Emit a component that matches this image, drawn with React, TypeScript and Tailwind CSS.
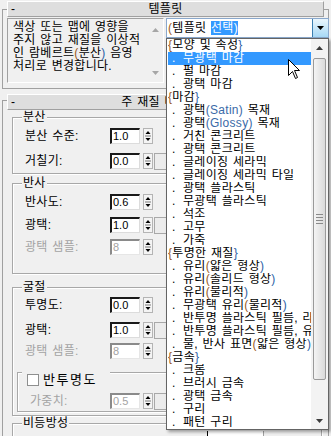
import React from "react";

const FONT = "font-['Liberation_Sans','Noto_Sans_CJK_KR',sans-serif]";

type Item = { text: string; head?: boolean; sel?: boolean };

const ITEMS: Item[] = [
  { text: "{모양 및 속성}", head: true },
  { text: "무광택 마감", sel: true },
  { text: "펄 마감" },
  { text: "광택 마감" },
  { text: "{마감}", head: true },
  { text: "광택(Satin) 목재" },
  { text: "광택(Glossy) 목재" },
  { text: "거친 콘크리트" },
  { text: "광택 콘크리트" },
  { text: "글레이징 세라믹" },
  { text: "글레이징 세라믹 타일" },
  { text: "광택 플라스틱" },
  { text: "무광택 플라스틱" },
  { text: "석조" },
  { text: "고무" },
  { text: "가죽" },
  { text: "{투명한 재질}", head: true },
  { text: "유리(얇은 형상)" },
  { text: "유리(솔리드 형상)" },
  { text: "유리(물리적)" },
  { text: "무광택 유리(물리적)" },
  { text: "반투명 플라스틱 필름, 라이트 블러" },
  { text: "반투명 플라스틱 필름, 유백색 유리" },
  { text: "물, 반사 표면(얇은 형상)" },
  { text: "{금속}", head: true },
  { text: "크롬" },
  { text: "브러시 금속" },
  { text: "광택 금속" },
  { text: "구리" },
  { text: "패턴 구리" },
];

// the old gulim rendering tints brackets and latin words, mimic it a little
function Paint({ text, plain }: { text: string; plain?: boolean }) {
  if (plain) return <>{text}</>;
  const parts = text.split(/(\([A-Za-z]+\)|[(){}])/).filter(Boolean);
  return (
    <>
      {parts.map((p, i) => {
        if (/^\([A-Za-z]+\)$/.test(p))
          return (
            <span key={i} className="text-[#3a6aa8]">
              {p}
            </span>
          );
        if (p === "(" || p === "{")
          return (
            <span key={i} className="text-[#9a5a22]">
              {p}
            </span>
          );
        if (p === ")" || p === "}")
          return (
            <span key={i} className="text-[#2d5fa6]">
              {p}
            </span>
          );
        return <React.Fragment key={i}>{p}</React.Fragment>;
      })}
    </>
  );
}

function RolloutHeader({ title, className }: { title: string; className: string }) {
  return (
    <div
      className={`flex h-[16px] items-center border border-b-[#a0a0a0] border-l-white border-r-[#a0a0a0] border-t-white bg-[#dedede] ${className}`}
    >
      <span className="w-[14px] shrink-0 pl-[3px]">-</span>
      <span className="flex-1 whitespace-nowrap text-center">{title}</span>
      <span className="w-[14px] shrink-0" />
    </div>
  );
}

function Arrow({ up, color = "#000" }: { up?: boolean; color?: string }) {
  return (
    <svg width="7" height="4" viewBox="0 0 7 4">
      <path d={up ? "M3.5 0 L7 4 L0 4 Z" : "M0 0 L7 0 L3.5 4 Z"} fill={color} />
    </svg>
  );
}

function Spinner() {
  return (
    <svg width="10" height="16" viewBox="0 0 10 16" className="ml-[3px] shrink-0">
      <rect x="0.5" y="0.5" width="9" height="15" fill="#f4f4f4" stroke="#b4b4b4" />
      <path d="M5 3 L7.5 6 L2.5 6 Z" fill="#000" />
      <path d="M2 8 H8" stroke="#7a7a7a" />
      <path d="M2.5 10 L7.5 10 L5 13 Z" fill="#000" />
    </svg>
  );
}

type RowProps = {
  label: string;
  value: string;
  mt: string;
  disabled?: boolean;
  map?: boolean;
  inner?: boolean;
};

function Row({ label, value, mt, disabled, map, inner }: RowProps) {
  return (
    <div className={`flex h-[16px] items-center ${mt}`}>
      <span
        className={`shrink-0 whitespace-nowrap pl-[12px] ${inner ? "w-[92px]" : "w-[97px]"} ${
          disabled ? "text-[#a3a3a3]" : "text-black"
        }`}
      >
        {label}
      </span>
      <div
        className={`flex h-[16px] w-[30px] shrink-0 items-center border-b border-l-2 border-r border-t-2 bg-white pl-[1px] font-['Liberation_Sans',sans-serif] text-[11px] tracking-normal ${
          disabled
            ? "border-b-[#e6e6e6] border-l-[#8a8a8a] border-r-[#e6e6e6] border-t-[#8a8a8a] text-[#a3a3a3]"
            : "border-b-[#dcdcdc] border-l-[#1a1a1a] border-r-[#dcdcdc] border-t-[#1a1a1a] text-black"
        }`}
      >
        {value}
      </div>
      <Spinner />
      {map && <div className="ml-[1px] h-[17px] w-[30px] shrink-0 border border-[#a8a8a8] bg-[#ececec]" />}
    </div>
  );
}

function GroupTitle({ text }: { text: string }) {
  return <div className="-mt-[7px] ml-[9px] w-fit bg-[#f0f0f0] px-[1px]">{text}</div>;
}

const ETCH = "border border-[#a8a8a8] shadow-[inset_1px_1px_0_#ffffff,1px_1px_0_#ffffff]";

export default function App() {
  return (
    <div
      className={`relative h-[436px] w-[331px] overflow-hidden bg-[#f0f0f0] text-[12px] leading-[13px] tracking-[0.3px] [word-spacing:1px] text-black ${FONT}`}
    >
      {/* 템플릿 rollout */}
      <div className="mx-[2px] mt-[9px] h-[80px] border border-[#a0a0a0]">
        <RolloutHeader title="템플릿" className="-mt-[9px] mx-[4px]" />
        <div className="mt-[1px] flex">
          <div className="ml-[4px] flex h-[65px] w-[157px] shrink-0 border border-b-white border-l-[#a0a0a0] border-r-white border-t-[#a0a0a0] bg-[#f0f0f0]">
            <div className="flex-1 whitespace-nowrap pl-[5px] pt-[2px]">
              <div>색상 또는 맵에 영향을</div>
              <div>주지 않고 재질을 이상적</div>
              <div>
                인 람베르트<Paint text="(분산)" /> 음영
              </div>
              <div>처리로 변경합니다.</div>
            </div>
            <div className="flex w-[16px] flex-col items-center pt-[9px]">
              <Arrow up color="#a6a6a6" />
              <div className="mt-[39px]">
                <Arrow color="#a6a6a6" />
              </div>
            </div>
          </div>

          {/* combobox */}
          <div className="ml-[2px] flex h-[20px] w-[163px] shrink-0 border border-[#8aa8cc] bg-white">
            <div className="flex flex-1 items-center whitespace-pre pl-[1px]">
              <Paint text="(템플릿 " />
              <span className="flex h-[14px] items-center bg-[#3399ff] text-white">선택)</span>
            </div>
            <div className="flex w-[16px] items-center justify-center border-l border-[#3c7fb1] bg-linear-to-b from-[#eaf6fd] to-[#a7d9f5]">
              <Arrow />
            </div>
          </div>
        </div>
      </div>

      {/* 주 재질 매개변수 rollout */}
      <div className="mx-[2px] mt-[11px] border-l border-r border-t border-[#a0a0a0] pb-[20px]">
        <RolloutHeader title="주 재질 매개변수" className="-mt-[7px] mx-[4px]" />

        <div className={`ml-[9px] mr-[6px] mt-[7px] pb-[4px] ${ETCH}`}>
          <GroupTitle text="분산" />
          <Row label="분산 수준:" value="1.0" mt="mt-[4px]" />
          <Row label="거칠기:" value="0.0" mt="mt-[9px]" map />
        </div>

        <div className={`ml-[9px] mr-[6px] mt-[9px] pb-[18px] ${ETCH}`}>
          <GroupTitle text="반사" />
          <Row label="반사도:" value="0.6" mt="mt-[4px]" />
          <Row label="광택:" value="1.0" mt="mt-[7px]" map />
          <Row label="광택 샘플:" value="8" mt="mt-[6px]" disabled />
        </div>

        <div className={`ml-[9px] mr-[6px] mt-[13px] pb-[3px] ${ETCH}`}>
          <GroupTitle text="굴절" />
          <Row label="투명도:" value="0.0" mt="mt-[3px]" />
          <Row label="광택:" value="1.0" mt="mt-[9px]" map />
          <Row label="광택 샘플:" value="8" mt="mt-[5px]" disabled />

          <div className={`ml-[4px] mr-[6px] mt-[13px] pb-[2px] ${ETCH}`}>
            <div className="-mt-[1px] ml-[4px] flex h-[15px] w-fit items-center bg-[#f0f0f0] pl-[5px] pr-[13px]">
              <div className="h-[12px] w-[12px] border border-[#8e8f8f] bg-white" />
              <span className="ml-[4px] text-[13px] tracking-[1.5px]">반투명도</span>
            </div>
            <Row label="가중치:" value="0.5" mt="mt-[6px]" disabled map inner />
          </div>
        </div>

        <div className={`ml-[9px] mr-[6px] mt-[7px] h-[40px] ${ETCH}`}>
          <GroupTitle text="비등방성" />
          <div className="ml-[194px] mt-[1px] h-[16px] w-[57px] border-l border-r border-l-black border-r-[#a0a0a0] bg-white" />
        </div>
      </div>

      {/* open drop-down list of the combobox */}
      <div className="absolute left-[166px] top-[38px] flex h-[392px] w-[163px] border border-[#646464] bg-white shadow-[2px_2px_3px_rgba(0,0,0,0.35)]">
        <ul className="w-[144px] shrink-0 overflow-hidden pl-[1px]">
          {ITEMS.map((it, i) => (
            <li
              key={i}
              className={`flex h-[13px] items-center overflow-hidden whitespace-pre ${
                it.sel ? "bg-[#3399ff] text-white" : ""
              }`}
            >
              {!it.head && <span className="w-[15px] shrink-0 pl-[4px]">.</span>}
              <span>
                <Paint text={it.text} plain={it.sel} />
              </span>
            </li>
          ))}
        </ul>
        <div className="flex w-[17px] flex-col bg-[#f3f3f3]">
          <div className="flex h-[17px] items-center justify-center">
            <Arrow up color="#3c3c3c" />
          </div>
          <div className="flex-1 px-[2px] pt-[2px]">
            <div className="flex h-[322px] flex-col items-center justify-center gap-[2px] rounded-[2px] border border-[#9a9a9a] bg-linear-to-r from-[#f4f4f4] to-[#dadada]">
              <div className="h-[1px] w-[7px] bg-[#8a8a8a]" />
              <div className="h-[1px] w-[7px] bg-[#8a8a8a]" />
              <div className="h-[1px] w-[7px] bg-[#8a8a8a]" />
              <div className="h-[1px] w-[7px] bg-[#8a8a8a]" />
            </div>
          </div>
          <div className="flex h-[17px] items-center justify-center">
            <Arrow color="#3c3c3c" />
          </div>
        </div>
      </div>

      {/* mouse pointer */}
      <svg className="absolute left-[288px] top-[59px]" width="13" height="21" viewBox="0 0 13 21">
        <path
          d="M0.5 0.5 V16.5 L4.5 12.5 L7.5 19.5 L9.5 18.5 L6.5 11.5 H11.5 Z"
          fill="#ffffff"
          stroke="#000000"
          strokeLinejoin="miter"
        />
      </svg>
    </div>
  );
}
